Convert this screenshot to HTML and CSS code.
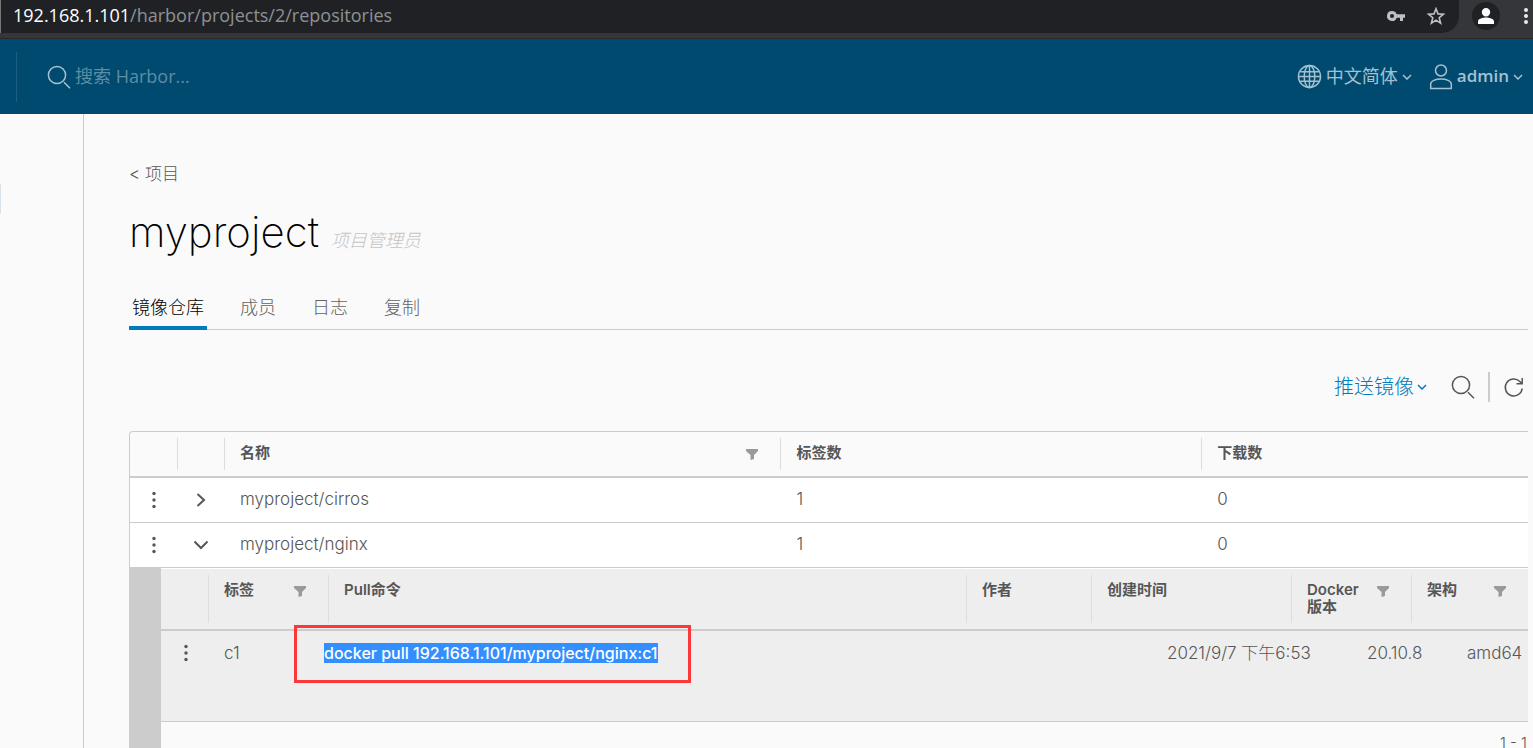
FILE: index.html
```html
<!DOCTYPE html>
<html lang="zh-CN">
<head>
<meta charset="utf-8">
<title>Harbor</title>
<link rel="stylesheet" href="styles.css">
</head>
<body>
<svg class="sprite" aria-hidden="true">
  <symbol id="search" viewBox="0 0 24 24"><circle cx="10" cy="10" r="8.6"/><path d="M17 17.300l6 6"/></symbol>
  <symbol id="caret" viewBox="0 0 10 6"><path d="M1 1l4 4 4-4"/></symbol>
  <symbol id="filter" viewBox="0 0 12 11"><path d="M0 0h12v2L8 6v4L4.500 11V6L0 2z"/></symbol>
  <symbol id="dots" viewBox="0 0 4 18"><circle cx="2" cy="2.500" r="1.700"/><circle cx="2" cy="9" r="1.700"/><circle cx="2" cy="15.500" r="1.700"/></symbol>
</svg>

<div class="browser">
  <div class="omnibox">
    <span class="url"><b>192.168.1.101</b>/harbor/projects/2/repositories</span>
    <button class="plain key" aria-label="密码"><svg width="18" height="12" viewBox="0 0 18 12"><path fill-rule="evenodd" d="M5 1a5 5 0 1 0 4.700 6.700H13V11h3V7.700h2V4.300H9.700A5 5 0 0 0 5 1zm0 3a2 2 0 1 1 0 4 2 2 0 0 1 0-4z"/></svg></button>
    <button class="plain" aria-label="收藏"><svg width="18" height="18" viewBox="0 0 18 18"><path fill="none" stroke="currentColor" stroke-width="1.600" d="M9 1.800l2 5.100 5.400.300-4.200 3.500 1.400 5.400L9 13.100l-4.600 3 1.400-5.400L1.600 7.200 7 6.900z"/></svg></button>
  </div>
  <button class="plain avatar" aria-label="用户"><svg width="16" height="16" viewBox="0 0 16 16"><path d="M8 0a4 4 0 1 1 0 8.400A4 4 0 0 1 8 0zM0 16v-2.500C0 10.500 5 9.500 8 9.500s8 1 8 4V16z"/></svg></button>
  <button class="plain" aria-label="菜单"><svg width="4" height="18" viewBox="0 0 4 18"><circle cx="2" cy="3" r="2"/><circle cx="2" cy="9" r="2"/><circle cx="2" cy="15" r="2"/></svg></button>
</div>

<header class="header">
  <label class="search">
    <svg class="line" width="24" height="24"><use href="#search"/></svg>
    <input type="search" placeholder="搜索 Harbor..." aria-label="搜索 Harbor">
  </label>
  <button class="plain menu">
    <svg class="line" width="25" height="25" viewBox="0 0 26 26"><circle cx="13" cy="13" r="11.500"/><ellipse cx="13" cy="13" rx="5.500" ry="11.500"/><path d="M13 1.500v23M1.500 13h23M3.500 8h19M3.500 18h19"/></svg>
    <span>中文简体</span>
    <svg class="line" width="10" height="6"><use href="#caret"/></svg>
  </button>
  <button class="plain menu user">
    <svg class="line" width="24" height="26" viewBox="0 0 24 26"><circle cx="12" cy="6.500" r="5.500"/><path d="M1.700 24.500v-4.500c0-3 5-5 10.300-5s10.300 2 10.300 5v4.500z"/></svg>
    <b>admin</b>
    <svg class="line" width="10" height="6"><use href="#caret"/></svg>
  </button>
</header>

<div class="layout">
  <nav class="side"><div class="current"></div></nav>
  <main class="main">
    <a class="back" href="#">&lt; 项目</a>
    <h1>myproject <i>项目管理员</i></h1>
    <div class="tabs">
      <button class="plain tab active">镜像仓库</button>
      <button class="plain tab">成员</button>
      <button class="plain tab">日志</button>
      <button class="plain tab">复制</button>
    </div>
    <div class="tools">
      <button class="plain push">推送镜像 <svg class="line" width="10" height="6"><use href="#caret"/></svg></button>
      <button class="plain find" aria-label="搜索"><svg class="line" width="24" height="24"><use href="#search"/></svg></button>
      <button class="plain refresh" aria-label="刷新"><svg class="line" width="20" height="20" viewBox="0 0 20 20"><path d="M18.200 11.500A8.500 8.500 0 1 1 15.800 4.500l2 2M18.200 1v5.700h-5.700"/></svg></button>
    </div>

    <table class="repos">
      <colgroup><col class="w47"><col class="w47"><col class="name"><col class="count"><col></colgroup>
      <thead>
        <tr>
          <th></th>
          <th><div></div></th>
          <th><div>名称<button class="plain filter" aria-label="筛选"><svg width="12" height="11"><use href="#filter"/></svg></button></div></th>
          <th><div>标签数</div></th>
          <th><div>下载数</div></th>
        </tr>
      </thead>
      <tbody>
        <tr class="repo">
          <td class="icon"><button class="plain" aria-label="操作"><svg width="4" height="18"><use href="#dots"/></svg></button></td>
          <td class="icon"><button class="plain" aria-label="展开"><svg class="line bold" width="10" height="16" viewBox="0 0 10 16"><path d="M1.500 2l6.500 6-6.500 6"/></svg></button></td>
          <td>myproject/cirros</td><td>1</td><td>0</td>
        </tr>
        <tr class="repo">
          <td class="icon"><button class="plain" aria-label="操作"><svg width="4" height="18"><use href="#dots"/></svg></button></td>
          <td class="icon"><button class="plain" aria-label="收起"><svg class="line bold" width="16" height="10" viewBox="0 0 16 10"><path d="M1.500 1.500l6.500 6.500 6.500-6.500"/></svg></button></td>
          <td>myproject/nginx</td><td>1</td><td>0</td>
        </tr>
        <tr>
          <td class="detail" colspan="5">
            <table class="tags">
              <colgroup><col class="w47"><col class="w100"><col class="w20"><col><col class="w125"><col class="w60"><col class="w140"><col class="w60"><col class="w60"><col class="w40"><col class="w77"></colgroup>
              <thead>
                <tr>
                  <th></th>
                  <th colspan="2"><div>标签<button class="plain filter" aria-label="筛选"><svg width="12" height="11"><use href="#filter"/></svg></button></div></th>
                  <th><div>Pull命令</div></th>
                  <th><div>作者</div></th>
                  <th colspan="2"><div>创建时间</div></th>
                  <th colspan="2"><div><span>Docker<br>版本</span><button class="plain filter" aria-label="筛选"><svg width="12" height="11"><use href="#filter"/></svg></button></div></th>
                  <th colspan="2"><div>架构<button class="plain filter" aria-label="筛选"><svg width="12" height="11"><use href="#filter"/></svg></button></div></th>
                </tr>
              </thead>
              <tbody>
                <tr>
                  <td class="icon"><button class="plain" aria-label="操作"><svg width="4" height="18"><use href="#dots"/></svg></button></td>
                  <td>c1</td>
                  <td colspan="2"><span class="marked"><mark>docker pull 192.168.1.101/myproject/nginx:c1</mark></span></td>
                  <td colspan="2"></td>
                  <td colspan="2">2021/9/7 下午6:53</td>
                  <td colspan="2">20.10.8</td>
                  <td>amd64</td>
                </tr>
              </tbody>
            </table>
            <div class="pages">1 - 1</div>
          </td>
        </tr>
      </tbody>
    </table>
  </main>
</div>
</body>
</html>
```
FILE: styles.css
```css
* { box-sizing: border-box; }
body {
  margin: 0;
  height: 100vh;
  overflow: hidden;
  display: flex;
  flex-direction: column;
  background: #fafafa;
  color: #565656;
  font: 300 17px/24px Inter, "Noto Sans CJK SC", sans-serif;
}
.sprite { position: absolute; width: 0; height: 0; }
svg { display: block; flex: none; fill: currentColor; }
.line { fill: none; stroke: currentColor; stroke-width: 1.5px; overflow: visible; }
.bold { stroke-width: 2px; }
.plain {
  margin: 0;
  padding: 0;
  border: 0;
  background: none;
  color: inherit;
  font: inherit;
}

.browser {
  flex: none;
  display: flex;
  align-items: flex-start;
  height: 39px;
  padding-right: 5px;
  background: #35363a;
  border-bottom: 1px solid #29292b;
  color: #e8eaed;
}
.browser > .plain { height: 32px; }
.omnibox {
  flex: 1;
  display: flex;
  align-items: center;
  gap: 22px;
  height: 33px;
  padding: 0 14px 2px 13px;
  margin-right: 13px;
  border-radius: 0 0 17px 0;
  background: #202124;
  box-shadow: inset 1px 0 #777;
  color: #bdc1c6;
}
.url {
  flex: 1;
  padding-bottom: 2px;
  color: #8d9195;
  font: 400 18px/24px "Open Sans", "Noto Sans CJK SC", sans-serif;
}
.url b { color: #fff; font-weight: 400; }
.browser > .avatar {
  display: grid;
  place-items: center;
  width: 28px;
  height: 28px;
  margin: 2px 24px 0 0;
  border-radius: 50%;
  background: #202124;
  color: #fff;
}

.header {
  flex: none;
  display: flex;
  align-items: center;
  height: 75px;
  padding: 0 10px 0 16px;
  background: #004a70;
  color: #a5c1cf;
  font: 400 18px/24px "Open Sans", "Noto Sans CJK SC", sans-serif;
}
.search {
  flex: 1;
  display: flex;
  align-items: center;
  gap: 4px;
  height: 50px;
  padding-left: 30px;
  border-left: 1px solid #1d5f82;
}
.search input {
  flex: 1;
  padding: 0 0 2px;
  border: 0;
  background: none;
  color: #fff;
  font: inherit;
}
.search input::placeholder { color: #5e8ca5; opacity: 1; }
.menu { display: flex; align-items: center; gap: 4px; }
.menu span, .menu b { padding-bottom: 2px; }
.user { margin-left: 17px; }
.user b { font-size: 17px; font-weight: 600; }

.layout { flex: 1; display: flex; min-height: 0; }
.side { flex: none; width: 84px; padding-top: 70px; border-right: 1px solid #ccc; }
.current { width: 1px; height: 30px; background: #d9e4ea; }
.main { flex: 1; min-width: 0; padding: 48px 5px 0 45px; }
.back {
  display: block;
  color: #565656;
  font-size: 17px;
  text-decoration: none;
}
h1 {
  margin: 22px 0 0;
  color: #000;
  font-size: 42px;
  font-weight: 200;
  line-height: 48px;
}
h1 i { color: #c4c4c4; font-size: 18px; }
.tabs {
  display: flex;
  gap: 30px;
  height: 45px;
  margin-top: 20px;
  border-bottom: 1px solid #ccc;
  color: #636363;
  font-size: 18px;
}
.tab { height: 45px; padding: 0 3px; }
.active { color: #000; box-shadow: inset 0 -4px #007cbb; }
.tools {
  display: flex;
  justify-content: flex-end;
  align-items: center;
  height: 32px;
  margin: 41px 0 28px;
}
.push { display: flex; align-items: center; gap: 3px; color: #007cbb; font-size: 20px; }
.find { margin: 0 13px 0 24px; }
.refresh { height: 30px; padding: 0 4px 0 14px; border-left: 2px solid #ccc; }

table { width: 100%; table-layout: fixed; border-collapse: separate; border-spacing: 0; }
th, td { padding: 0; text-align: left; font-weight: inherit; }
th { padding: 6px 0; border-bottom: 2px solid #ccc; vertical-align: top; }
th > div {
  display: flex;
  justify-content: space-between;
  align-items: flex-start;
  height: 32px;
  padding: 6px 22px 0 15px;
  border-left: 1px solid #ddd;
  font-size: 15px;
  font-weight: 600;
  line-height: 17px;
}
.filter { padding-top: 5px; color: #9a9a9a; }
.repos { border: 1px solid #ccc; border-right: 0; border-radius: 4px 0 0 0; }
.name { width: 39.800%; }
.count { width: 30.100%; }
.repo td { height: 45px; padding: 0 0 2px 16px; background: #fff; border-bottom: 1px solid #ccc; }
.repo td.icon { padding: 0; }
.icon .plain { display: grid; place-items: center; width: 100%; }

.repos .detail { padding-left: 31px; background: linear-gradient(to right, #ccc 31px, #fafafa 31px); }
.tags { background: #eee; border-top: 1px solid #fff; }
.tags th > div { height: 48px; }
.tags td {
  height: 91px;
  padding: 10px 0 0 16px;
  border-bottom: 1px solid #ccc;
  vertical-align: top;
  white-space: nowrap;
}
.tags td.icon { padding: 13px 0 0 3px; }
.w47 { width: 47px; }
.w100 { width: 100px; }
.w20 { width: 20px; }
.w125 { width: 125px; }
.w60 { width: 60px; }
.w140 { width: 140px; }
.w40 { width: 40px; }
.w77 { width: 77px; }
.marked { position: relative; font-size: 16px; }
.marked::before {
  content: "";
  position: absolute;
  inset: -18px -33px -20px -30px;
  border: 3px solid #fc3738;
}
mark { background: #338fff; color: #fff; font-weight: 500; }
.pages { padding: 9px 1px; font-size: 15px; text-align: right; }
```
